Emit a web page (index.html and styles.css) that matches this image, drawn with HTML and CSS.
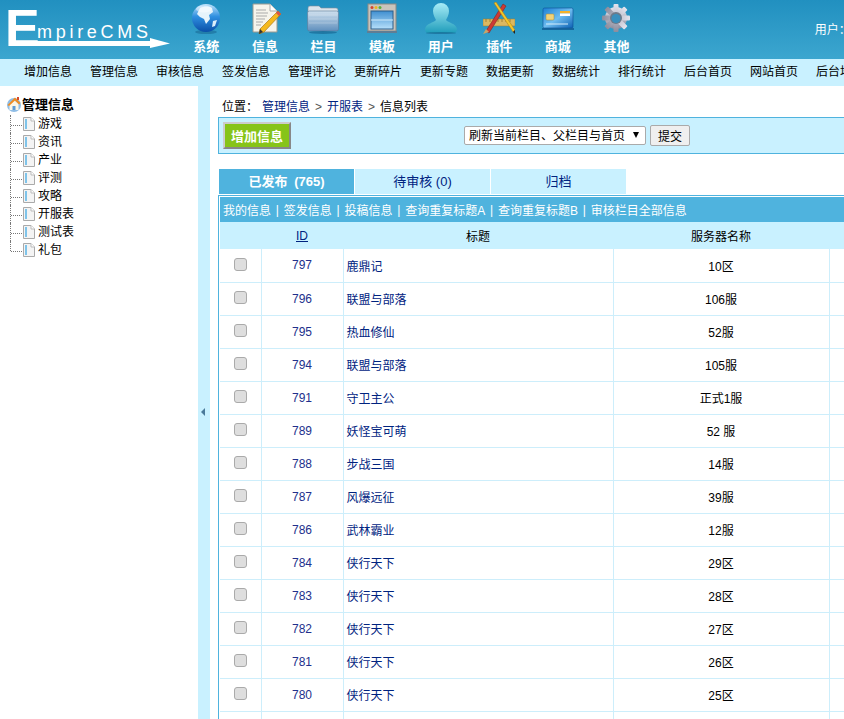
FILE: index.html
```html
<!DOCTYPE html>
<html lang="zh-CN">
<head>
<meta charset="UTF-8" />
<title>管理信息</title>
<link rel="stylesheet" href="styles.css">
</head>
<body>
<svg class="defs" width="0" height="0">
  <defs>
    <linearGradient id="gGlobe" x1="0" y1="0" x2="0" y2="1"><stop offset="0" stop-color="#bfe3fb"/><stop offset=".45" stop-color="#2f8fe0"/><stop offset="1" stop-color="#0a4fa8"/></linearGradient>
    <linearGradient id="gFolder" x1="0" y1="0" x2="0" y2="1"><stop offset="0" stop-color="#cfe0ee"/><stop offset="1" stop-color="#5f8fbd"/></linearGradient>
    <linearGradient id="gWin" x1="0" y1="0" x2="0" y2="1"><stop offset="0" stop-color="#3f8fd0"/><stop offset="1" stop-color="#b7e0fa"/></linearGradient>
    <linearGradient id="gUser" x1="0" y1="0" x2="0" y2="1"><stop offset="0" stop-color="#a8ecf7"/><stop offset="1" stop-color="#1f9dbb"/></linearGradient>
    <linearGradient id="gCard" x1="0" y1="0" x2="1" y2="1"><stop offset="0" stop-color="#1a7fd4"/><stop offset=".5" stop-color="#6fbdf0"/><stop offset="1" stop-color="#0c62b4"/></linearGradient>
    <linearGradient id="gGear" x1="0" y1="0" x2="0" y2="1"><stop offset="0" stop-color="#e4e4ee"/><stop offset="1" stop-color="#8c8c9c"/></linearGradient>
    <symbol id="file" viewBox="0 0 12 14">
      <path d="M.5.5H8L11.5 4V13.5H.5Z" fill="#f4f4f4" stroke="#aaa"/>
      <path d="M8 .5V4H11.5" fill="#fff" stroke="#bbb"/>
      <rect x="2" y="2" width="2" height="10" fill="#7fc4ea"/>
    </symbol>
  </defs>
</svg>

<header class="top">
  <svg class="logo" width="177" height="59" viewBox="0 0 177 59">
    <text class="logo-e" x="5" y="46">E</text>
    <text class="logo-name" x="37" y="38" textLength="111">mpireCMS</text>
    <rect x="30" y="41" width="121" height="5" fill="#fff"/>
    <polygon points="150,38 170,43.5 150,48" fill="#fff"/>
  </svg>
  <nav class="mainnav">
    <a class="mainnav-item">
      <svg class="icon" viewBox="0 0 32 32"><ellipse cx="16" cy="30" rx="11" ry="2" fill="#14608c" opacity=".5"/><circle cx="16" cy="16" r="14" fill="url(#gGlobe)"/><path d="M10 6c4-2 9-2 12 0l1 4-4 3 1 4-4 5-2-5-4-2-3-3z" fill="#e6f3fb"/><path d="M23 19l4-1-2 6-3 1z" fill="#dceefa"/><ellipse cx="14" cy="7" rx="8" ry="3.5" fill="#fff" opacity=".45"/></svg>
      <span>系统</span>
    </a>
    <a class="mainnav-item">
      <svg class="icon" viewBox="0 0 32 32"><path d="M4 2H21L28 9V30H4Z" fill="#f6f4ec" stroke="#9a9a90"/><path d="M21 2V9H28" fill="#fff" stroke="#aaa"/><path d="M7 8h10M7 11h12M7 14h11M7 17h9M7 20h7M7 23h5" stroke="#aaa"/><path d="M29 9l3 3-17 18-5 2 1-5z" fill="#f5b91e" stroke="#a06a10" stroke-width=".6"/><path d="M29 9l3 3-2 2-3-3z" fill="#d9534a"/><path d="M10 32l1-5 3 3z" fill="#333"/></svg>
      <span>信息</span>
    </a>
    <a class="mainnav-item">
      <svg class="icon" viewBox="0 0 32 32"><path d="M1 6q0-2 2-2h9l2 2h15q2 0 2 2v4H1z" fill="#dbe4ec" stroke="#7d8c9a" stroke-width=".6"/><rect x="0.500" y="9" width="31" height="20" rx="2" fill="url(#gFolder)" stroke="#5a7a98" stroke-width=".6"/><path d="M2 13h28M2 17h28M2 21h28" stroke="#fff" opacity=".25"/><ellipse cx="16" cy="30.500" rx="14" ry="1.500" fill="#14608c" opacity=".6"/></svg>
      <span>栏目</span>
    </a>
    <a class="mainnav-item">
      <svg class="icon" viewBox="0 0 32 32"><rect x="2" y="2" width="28" height="27" fill="#c9c4bc" stroke="#8d8a84"/><rect x="5" y="9" width="22" height="18" fill="url(#gWin)" stroke="#2b5f8c"/><path d="M5 18H27" stroke="#cfeafa"/><circle cx="6" cy="5.500" r="1.500" fill="#d2452f"/><circle cx="10" cy="5.500" r="1.500" fill="#eeb520"/><circle cx="14" cy="5.500" r="1.500" fill="#5cb03a"/><rect x="1" y="29" width="30" height="2" fill="#5f7d94"/></svg>
      <span>模板</span>
    </a>
    <a class="mainnav-item">
      <svg class="icon" viewBox="0 0 32 32"><path d="M11 18c-1-2-3-5-3-9a8 8 0 0 1 16 0c0 4-2 7-3 9 2 3 10 3 11 9 0 2-1 4-3 4H3c-2 0-3-2-3-4 1-6 9-6 11-9z" fill="url(#gUser)"/><ellipse cx="16" cy="31" rx="15" ry="1" fill="#14608c" opacity=".6"/></svg>
      <span>用户</span>
    </a>
    <a class="mainnav-item">
      <svg class="icon" viewBox="0 0 32 32"><rect x="0" y="17" width="32" height="7" fill="#dcb860" stroke="#9c7c30" stroke-width=".5"/><path d="M3 17v3M7 17v3M11 17v3M15 17v3M19 17v3M23 17v3M27 17v3" stroke="#8c6c20" stroke-width=".7"/><path d="M3 29L20 2l3 2L6 31z" fill="#cc3a34" stroke="#7c1c18" stroke-width=".5"/><path d="M11 1l2-1 19 28-2 2z" fill="#f6c52a" stroke="#a47a10" stroke-width=".5"/><path d="M0 32l3-5 3 3z" fill="#c9a468"/><path d="M30 30l2-2 0 4z" fill="#222"/></svg>
      <span>插件</span>
    </a>
    <a class="mainnav-item">
      <svg class="icon" viewBox="0 0 32 32"><rect x="1" y="6" width="30" height="20" rx="1.500" fill="url(#gCard)" stroke="#0b4f94" stroke-width=".6"/><rect x="18" y="9" width="10" height="2.500" fill="#f5b22a"/><rect x="18" y="11.500" width="10" height="2.500" fill="#fff"/><rect x="4" y="12" width="8" height="6" rx="1" fill="#f1d27a" stroke="#a88a30" stroke-width=".5"/><path d="M4 22h22" stroke="#d7eefc"/><rect x="0" y="26" width="32" height="2" fill="#0f5a94" opacity=".8"/></svg>
      <span>商城</span>
    </a>
    <a class="mainnav-item">
      <svg class="icon" viewBox="0 0 32 32"><g fill="url(#gGear)"><circle cx="16" cy="16" r="11"/><rect x="13.500" y="2" width="5" height="28" rx="1"/><rect x="13.500" y="2" width="5" height="28" rx="1" transform="rotate(45 16 16)"/><rect x="13.500" y="2" width="5" height="28" rx="1" transform="rotate(90 16 16)"/><rect x="13.500" y="2" width="5" height="28" rx="1" transform="rotate(135 16 16)"/></g><circle cx="16" cy="16" r="6" fill="#6c7a8a"/><circle cx="16" cy="16.500" r="4.500" fill="#3a8fbd"/></svg>
      <span>其他</span>
    </a>
  </nav>
  <div class="userinfo">用户：admin</div>
</header>

<nav class="subnav">
  <a>增加信息</a><a>管理信息</a><a>审核信息</a><a>签发信息</a><a>管理评论</a><a>更新碎片</a><a>更新专题</a><a>数据更新</a><a>数据统计</a><a>排行统计</a><a>后台首页</a><a>网站首页</a><a>后台地图</a>
</nav>

<div class="layout">
  <aside class="tree">
    <div class="tree-root">
      <svg width="16" height="16" viewBox="0 0 16 16"><circle cx="8" cy="9" r="7" fill="#8fbde6"/><path d="M3.500 8L8 4l4.500 4v6h-9z" fill="#fdf6e4"/><rect x="6.500" y="10" width="3" height="4" fill="#5d9bd5"/><path d="M1.500 9L9 1.500 14.500 7l-1.500 1.500L9 4.500 3 10z" fill="#ef8d22"/><rect x="11" y="1" width="2" height="3" fill="#d84a2a"/></svg>
      <span>管理信息</span>
    </div>
    <ul class="tree-list">
      <li><i class="branch"></i><svg class="file" width="12" height="14"><use href="#file"/></svg>游戏</li>
      <li><i class="branch"></i><svg class="file" width="12" height="14"><use href="#file"/></svg>资讯</li>
      <li><i class="branch"></i><svg class="file" width="12" height="14"><use href="#file"/></svg>产业</li>
      <li><i class="branch"></i><svg class="file" width="12" height="14"><use href="#file"/></svg>评测</li>
      <li><i class="branch"></i><svg class="file" width="12" height="14"><use href="#file"/></svg>攻略</li>
      <li><i class="branch"></i><svg class="file" width="12" height="14"><use href="#file"/></svg>开服表</li>
      <li><i class="branch"></i><svg class="file" width="12" height="14"><use href="#file"/></svg>测试表</li>
      <li><i class="branch"></i><svg class="file" width="12" height="14"><use href="#file"/></svg>礼包</li>
    </ul>
  </aside>

  <div class="splitter"><i class="splitter-arrow"></i></div>

  <main class="content">
    <div class="crumb">位置：<a class="crumb-first">管理信息</a><b>&gt;</b><a>开服表</a><b>&gt;</b>信息列表</div>

    <div class="toolbar">
      <button class="btn-add" type="button">增加信息</button>
      <form class="refresh">
        <select class="refresh-select"><option>刷新当前栏目、父栏目与首页</option></select>
        <button class="btn-submit" type="button">提交</button>
      </form>
    </div>

    <div class="tabs">
      <a class="tab tab-on">已发布 (765)</a>
      <a class="tab">待审核 (0)</a>
      <a class="tab">归档</a>
    </div>

    <div class="list">
      <div class="list-bar">
        <a>我的信息</a><s>|</s><a>签发信息</a><s>|</s><a>投稿信息</a><s>|</s><a>查询重复标题A</a><s>|</s><a>查询重复标题B</a><s>|</s><a>审核栏目全部信息</a>
      </div>
      <table class="info">
        <colgroup><col class="c-check"><col class="c-id"><col class="c-title"><col class="c-server"><col></colgroup>
        <thead>
          <tr><th></th><th><a class="sort">ID</a></th><th>标题</th><th>服务器名称</th><th></th></tr>
        </thead>
        <tbody>
          <tr><td class="mid"><input type="checkbox"></td><td class="id">797</td><td><a>鹿鼎记</a></td><td class="mid">10区</td><td></td></tr>
          <tr><td class="mid"><input type="checkbox"></td><td class="id">796</td><td><a>联盟与部落</a></td><td class="mid">106服</td><td></td></tr>
          <tr><td class="mid"><input type="checkbox"></td><td class="id">795</td><td><a>热血修仙</a></td><td class="mid">52服</td><td></td></tr>
          <tr><td class="mid"><input type="checkbox"></td><td class="id">794</td><td><a>联盟与部落</a></td><td class="mid">105服</td><td></td></tr>
          <tr><td class="mid"><input type="checkbox"></td><td class="id">791</td><td><a>守卫主公</a></td><td class="mid">正式1服</td><td></td></tr>
          <tr><td class="mid"><input type="checkbox"></td><td class="id">789</td><td><a>妖怪宝可萌</a></td><td class="mid">52 服</td><td></td></tr>
          <tr><td class="mid"><input type="checkbox"></td><td class="id">788</td><td><a>步战三国</a></td><td class="mid">14服</td><td></td></tr>
          <tr><td class="mid"><input type="checkbox"></td><td class="id">787</td><td><a>风爆远征</a></td><td class="mid">39服</td><td></td></tr>
          <tr><td class="mid"><input type="checkbox"></td><td class="id">786</td><td><a>武林霸业</a></td><td class="mid">12服</td><td></td></tr>
          <tr><td class="mid"><input type="checkbox"></td><td class="id">784</td><td><a>侠行天下</a></td><td class="mid">29区</td><td></td></tr>
          <tr><td class="mid"><input type="checkbox"></td><td class="id">783</td><td><a>侠行天下</a></td><td class="mid">28区</td><td></td></tr>
          <tr><td class="mid"><input type="checkbox"></td><td class="id">782</td><td><a>侠行天下</a></td><td class="mid">27区</td><td></td></tr>
          <tr><td class="mid"><input type="checkbox"></td><td class="id">781</td><td><a>侠行天下</a></td><td class="mid">26区</td><td></td></tr>
          <tr><td class="mid"><input type="checkbox"></td><td class="id">780</td><td><a>侠行天下</a></td><td class="mid">25区</td><td></td></tr>
          <tr><td class="mid"></td><td class="id"></td><td></td><td class="mid"></td><td></td></tr>
        </tbody>
      </table>
    </div>
  </main>
</div>
</body>
</html>
```

FILE: styles.css
```css
:root {
  --pale: #c9f1ff;
  --blue: #4fb3de;
  --line: #cdeefb;
  --link: #00237f;
  --font: "Liberation Sans", "Noto Sans CJK SC", sans-serif;
}
* {
  box-sizing: border-box;
}
html, body {
  height: 100%;
}
body {
  margin: 0;
  overflow: hidden;
  display: flex;
  flex-direction: column;
  background: #fff;
  color: #000;
  font-family: var(--font);
  font-size: 12px;
}
.defs {
  display: block;
  height: 0;
}
ul {
  margin: 0;
  padding: 0;
  list-style: none;
}

/* top bar */
.top {
  display: flex;
  flex: none;
  height: 59px;
  background: linear-gradient(#2190c0, #3ca6cf);
  color: #fff;
}
.logo {
  flex: none;
}
.logo-e {
  fill: #fff;
  font-family: "Liberation Sans", sans-serif;
  font-size: 52px;
  font-weight: bold;
}
.logo-name {
  fill: #fff;
  font-family: "Liberation Sans", sans-serif;
  font-size: 18px;
}
.mainnav {
  display: flex;
}
.mainnav-item {
  width: 58.6px;
  display: flex;
  flex-direction: column;
  align-items: center;
  padding-top: 2px;
}
.mainnav-item span {
  margin-top: 4px;
  font-size: 13px;
  font-weight: bold;
  line-height: 18px;
}
.icon {
  display: block;
  width: 32px;
  height: 32px;
}
.userinfo {
  margin-left: 169px;
  padding-top: 22px;
  font-size: 12px;
  line-height: 16px;
  white-space: nowrap;
}

/* second row */
.subnav {
  display: flex;
  flex: none;
  height: 27px;
  padding-left: 24px;
  background: var(--pale);
  line-height: 27px;
  white-space: nowrap;
}
.subnav a {
  flex: none;
  width: 48px;
  margin-right: 18px;
}

.layout {
  flex: 1;
  display: flex;
  min-height: 0;
}

/* left tree */
.tree {
  flex: none;
  width: 198px;
  padding: 9px 0 0 6px;
}
.tree-root {
  display: flex;
  align-items: center;
  height: 17px;
  font-size: 13px;
  font-weight: bold;
}
.tree-list {
  margin-left: 4px;
  padding-top: 3px;
}
.tree-list li {
  display: flex;
  align-items: center;
  height: 18px;
  line-height: 18px;
}
.branch {
  flex: none;
  align-self: flex-start;
  width: 12px;
  height: 18px;
  border-left: 1px dotted #777;
}
.branch::after {
  content: "";
  display: block;
  width: 100%;
  height: 10px;
  border-bottom: 1px dotted #777;
}
.tree-list li:last-child .branch {
  height: 10px;
}
.file {
  flex: none;
  margin: 0 3px 0 1px;
}

/* splitter */
.splitter {
  flex: none;
  width: 12px;
  display: flex;
  justify-content: center;
  align-items: center;
  padding: 18px 3px 0 0;
  background: var(--pale);
}
.splitter-arrow {
  width: 0;
  height: 0;
  border: 4px solid transparent;
  border-left: 0;
  border-right-color: #4a7a9a;
}

/* right part */
.content {
  flex: 1;
  min-width: 0;
  overflow: hidden;
  padding: 13px 0 0 8px;
}
.crumb {
  height: 18px;
  padding-left: 4px;
  line-height: 16px;
}
.crumb a {
  color: var(--link);
}
.crumb-first {
  margin-left: 4px;
}
.crumb b {
  margin: 0 5px;
  color: #555;
  font-weight: normal;
}
.toolbar {
  display: flex;
  align-items: center;
  height: 37px;
  padding-left: 4px;
  background: var(--pale);
  border: 1px solid var(--blue);
  border-right: 0;
}
.btn-add {
  width: 68px;
  height: 27px;
  padding: 0;
  border: 2px solid #a8a8a8;
  border-color: #ccc #888 #888 #ccc;
  background: #86c418;
  color: #fff;
  font-family: var(--font);
  font-size: 13px;
  font-weight: bold;
}
.refresh {
  display: flex;
  align-items: center;
  margin-left: 173px;
}
.refresh-select {
  appearance: none;
  width: 182px;
  height: 19px;
  padding: 0 0 0 4px;
  border: 1px solid #aaa;
  border-radius: 2px;
  background: #fff url("data:image/svg+xml,%3Csvg xmlns='http://www.w3.org/2000/svg' width='6' height='6'%3E%3Cpath d='M0 0H6L3 6Z'/%3E%3C/svg%3E") no-repeat 168px 5px;
  color: #000;
  font-family: var(--font);
  font-size: 12px;
}
.btn-submit {
  width: 40px;
  height: 21px;
  margin-left: 4px;
  padding: 0;
  border: 1px solid #aaa;
  border-radius: 2px;
  background: #efefef;
  color: #000;
  font-family: var(--font);
  font-size: 12px;
}
.tabs {
  display: flex;
  gap: 1px;
  margin: 15px 0 0 1px;
}
.tab {
  width: 135px;
  height: 25px;
  background: var(--pale);
  color: var(--link);
  font-size: 13px;
  line-height: 25px;
  text-align: center;
}
.tab-on {
  background: var(--blue);
  color: #fff;
  font-weight: bold;
  word-spacing: 3px;
}

/* list */
.list {
  width: 900px;
  margin-top: 1px;
  padding: 1px 0 0 1px;
  border-top: 1px solid var(--blue);
  border-left: 1px solid var(--blue);
}
.list-bar {
  display: flex;
  align-items: center;
  height: 25px;
  padding-left: 3px;
  background: var(--blue);
  color: #fff;
  white-space: nowrap;
}
.list-bar s {
  margin: 0 4.8px;
  text-decoration: none;
}
.info {
  width: 100%;
  table-layout: fixed;
  border-collapse: collapse;
}
.c-check {
  width: 41px;
}
.c-id {
  width: 82px;
}
.c-title {
  width: 270px;
}
.c-server {
  width: 216px;
}
.info th {
  height: 27px;
  padding: 0;
  background: var(--pale);
  font-weight: normal;
  text-align: center;
}
.sort {
  color: var(--link);
  text-decoration: underline;
}
.info td {
  height: 33px;
  padding: 0 3px;
  border-right: 1px solid var(--line);
  border-bottom: 1px solid var(--line);
}
.info td a {
  color: var(--link);
}
.info .mid, .info .id {
  text-align: center;
}
.info .id {
  color: #22308c;
}
.info input {
  appearance: none;
  display: block;
  width: 13px;
  height: 13px;
  margin: 0 auto 2px;
  background: #dedede;
  border: 1px solid #aaa;
  border-radius: 3px;
}
```
